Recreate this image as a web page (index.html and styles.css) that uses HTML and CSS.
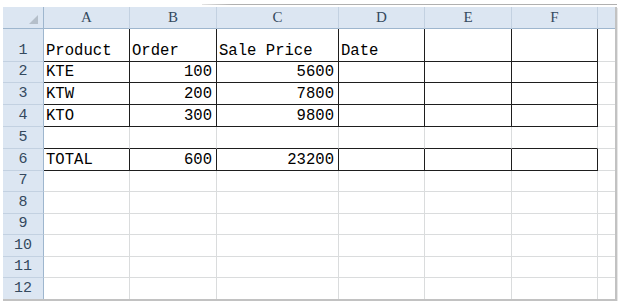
FILE: index.html
```html
<!DOCTYPE html>
<html>
<head>
    <meta charset="utf-8">
    <title>Sheet1</title>
    <link rel="stylesheet" href="styles.css">
</head>
<body>
<div class="sheet">
    <div class="topline"></div>
    <div class="grid">
        <!-- column headers -->
        <div class="corner">
            <svg width="9" height="9" viewBox="0 0 9 9"><polygon points="0,9 9,0 9,9" fill="#b5bfca"/></svg>
        </div>
        <div class="hd">A</div>
        <div class="hd">B</div>
        <div class="hd">C</div>
        <div class="hd">D</div>
        <div class="hd">E</div>
        <div class="hd">F</div>
        <div class="hd last"></div>

        <!-- row 1 -->
        <div class="rh">1</div>
        <div class="c box">Product</div>
        <div class="c box">Order</div>
        <div class="c box">Sale Price</div>
        <div class="c box">Date</div>
        <div class="c box"></div>
        <div class="c box"></div>
        <div class="c g"></div>

        <!-- row 2 -->
        <div class="rh">2</div>
        <div class="c box">KTE</div>
        <div class="c box num">100</div>
        <div class="c box num">5600</div>
        <div class="c box"></div>
        <div class="c box"></div>
        <div class="c box"></div>
        <div class="c g"></div>

        <!-- row 3 -->
        <div class="rh">3</div>
        <div class="c box">KTW</div>
        <div class="c box num">200</div>
        <div class="c box num">7800</div>
        <div class="c box"></div>
        <div class="c box"></div>
        <div class="c box"></div>
        <div class="c g"></div>

        <!-- row 4 -->
        <div class="rh">4</div>
        <div class="c box">KTO</div>
        <div class="c box num">300</div>
        <div class="c box num">9800</div>
        <div class="c box"></div>
        <div class="c box"></div>
        <div class="c box"></div>
        <div class="c g"></div>

        <!-- row 5, empty between the blocks -->
        <div class="rh">5</div>
        <div class="c above"></div>
        <div class="c above"></div>
        <div class="c above"></div>
        <div class="c above"></div>
        <div class="c above"></div>
        <div class="c above"></div>
        <div class="c g"></div>

        <!-- row 6 -->
        <div class="rh">6</div>
        <div class="c box">TOTAL</div>
        <div class="c box num">600</div>
        <div class="c box num">23200</div>
        <div class="c box"></div>
        <div class="c box"></div>
        <div class="c box"></div>
        <div class="c g"></div>

        <div class="rh">7</div>
        <div class="c"></div><div class="c"></div><div class="c"></div><div class="c"></div><div class="c"></div><div class="c"></div><div class="c g"></div>
        <div class="rh">8</div>
        <div class="c"></div><div class="c"></div><div class="c"></div><div class="c"></div><div class="c"></div><div class="c"></div><div class="c g"></div>
        <div class="rh">9</div>
        <div class="c"></div><div class="c"></div><div class="c"></div><div class="c"></div><div class="c"></div><div class="c"></div><div class="c g"></div>
        <div class="rh">10</div>
        <div class="c"></div><div class="c"></div><div class="c"></div><div class="c"></div><div class="c"></div><div class="c"></div><div class="c g"></div>
        <div class="rh">11</div>
        <div class="c"></div><div class="c"></div><div class="c"></div><div class="c"></div><div class="c"></div><div class="c"></div><div class="c g"></div>
        <div class="rh end">12</div>
        <div class="c end"></div><div class="c end"></div><div class="c end"></div><div class="c end"></div><div class="c end"></div><div class="c end"></div><div class="c g end"></div>
    </div>
</div>
</body>
</html>
```

FILE: styles.css
```css
body {
    margin: 0;
    background: #fff;
}

.sheet {
    margin: 4px 0 0 3px;
    width: 614px;
}

.topline {
    margin-left: 199px;
    height: 1px;
    background: linear-gradient(to right, #e4e4e4, #b0b0b0 30px, #b0b0b0);
    margin-bottom: 2px;
}

.grid {
    display: grid;
    grid-template-columns: 41px 86px 87px 122px 86px 87px 86px 17px;
    grid-template-rows: 22px 33px 21px 22px 22px 22px 22px 21px 22px 21px 22px 21px 21px;
    border-right: 2px solid #c2c2c2;
    border-bottom: 2px solid #c2c2c2;
    box-shadow: 1px 1px 0 #e6e6e6;
}

.grid > div {
    box-sizing: border-box;
}

/* headers */
.corner,
.hd,
.rh {
    background: #dce6f2;
    color: #34495e;
}

.corner {
    display: flex;
    align-items: flex-end;
    justify-content: flex-end;
    padding: 0 5px 4px 0;
    border-right: 1px solid #9eb6ce;
    border-bottom: 1px solid #9eb6ce;
}

.hd {
    display: flex;
    align-items: flex-end;
    justify-content: center;
    font-family: "Liberation Serif", serif;
    font-size: 15px;
    line-height: 15px;
    padding-bottom: 3px;
    border-right: 1px solid #c3d1e1;
    border-bottom: 1px solid #9eb6ce;
}

.hd.last {
    border-right: none;
}

.rh {
    display: flex;
    align-items: flex-end;
    justify-content: center;
    font-family: "Liberation Mono", monospace;
    font-size: 15px;
    line-height: 15px;
    padding-bottom: 3px;
    border-right: 1px solid #9eb6ce;
    border-bottom: 1px solid #c3d1e1;
}

/* cells */
.c {
    display: flex;
    align-items: flex-end;
    font-family: "Liberation Mono", monospace;
    font-size: 15.6px;
    line-height: 16px;
    color: #000;
    padding: 0 0 2px 2px;
    border-right: 1px solid #dadcdd;
    border-bottom: 1px solid #dadcdd;
    white-space: nowrap;
}

.c.num {
    justify-content: flex-end;
    padding-right: 4px;
}

.c.box {
    border-right-color: #1e1e1e;
    border-bottom-color: #1e1e1e;
}

.c.above {
    border-bottom-color: #1e1e1e;
}

.c.g {
    border-right: none;
}

.end {
    border-bottom: none !important;
}
```
